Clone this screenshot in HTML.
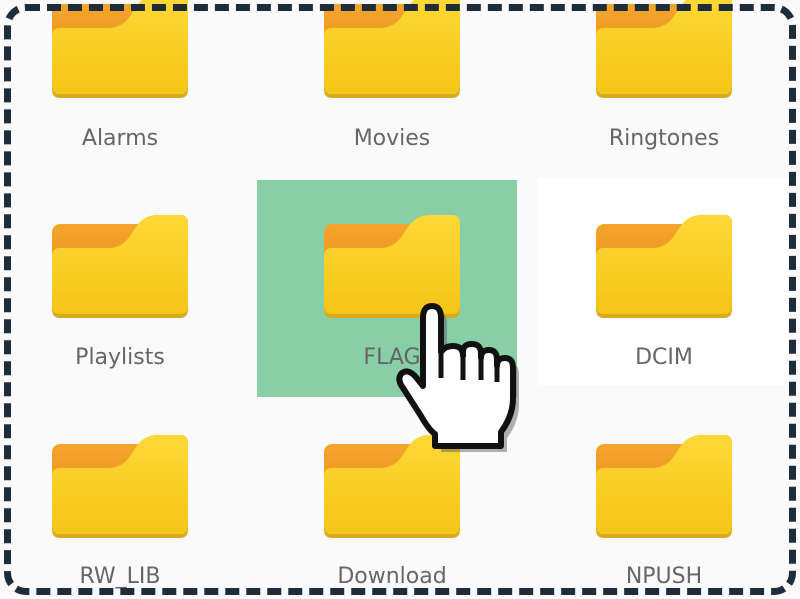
<!DOCTYPE html><html><head><style>
body{margin:0;width:800px;height:599px;overflow:hidden;background:#fafafa;font-family:"DejaVu Sans","Liberation Sans",sans-serif;position:relative}
.f{position:absolute;width:136px;height:103px}
.l{position:absolute;width:220px;text-align:center;font-size:22px;color:#666}
</style></head><body>
<div style="position:absolute;left:538px;top:178px;width:252px;height:207px;background:#fff"></div>
<div style="position:absolute;left:257px;top:180px;width:260px;height:217px;background:#88cea6"></div>
<svg width="0" height="0" style="position:absolute"><defs>
<linearGradient id="g" x1="0" y1="0" x2="0" y2="1"><stop offset="0" stop-color="#fdd835"/><stop offset="1" stop-color="#f5c518"/></linearGradient>
<linearGradient id="o" x1="0" y1="0" x2="0" y2="1"><stop offset="0" stop-color="#f5a52c"/><stop offset="1" stop-color="#e8901f"/></linearGradient>
<symbol id="fd" viewBox="0 0 136 103">
<rect x="0" y="9" width="95" height="55" rx="8" fill="url(#o)"/>
<path d="M0 41 Q0 33 8 33 L56 33 Q70 33 78 21 L84 12 Q92 0 106 0 L128 0 Q136 0 136 8 L136 94 Q136 103 128 103 L8 103 Q0 103 0 94 Z" fill="#d9aa1e"/>
<path d="M0 41 Q0 33 8 33 L56 33 Q70 33 78 21 L84 12 Q92 0 106 0 L128 0 Q136 0 136 8 L136 91 Q136 99 128 99 L8 99 Q0 99 0 91 Z" fill="url(#g)"/>
</symbol></defs></svg>
<svg class="f" style="left:52px;top:-5px"><use href="#fd"/></svg>
<svg class="f" style="left:324px;top:-5px"><use href="#fd"/></svg>
<svg class="f" style="left:596px;top:-5px"><use href="#fd"/></svg>
<svg class="f" style="left:52px;top:215px"><use href="#fd"/></svg>
<svg class="f" style="left:324px;top:215px"><use href="#fd"/></svg>
<svg class="f" style="left:596px;top:215px"><use href="#fd"/></svg>
<svg class="f" style="left:52px;top:435px"><use href="#fd"/></svg>
<svg class="f" style="left:324px;top:435px"><use href="#fd"/></svg>
<svg class="f" style="left:596px;top:435px"><use href="#fd"/></svg>
<div class="l" style="left:10px;top:126px">Alarms</div>
<div class="l" style="left:282px;top:126px">Movies</div>
<div class="l" style="left:554px;top:126px">Ringtones</div>
<div class="l" style="left:10px;top:345px">Playlists</div>
<div class="l" style="left:282px;top:345px">FLAG</div>
<div class="l" style="left:554px;top:345px">DCIM</div>
<div class="l" style="left:10px;top:564px">RW_LIB</div>
<div class="l" style="left:282px;top:564px">Download</div>
<div class="l" style="left:554px;top:564px">NPUSH</div>
<svg style="position:absolute;left:395px;top:298px" width="130" height="160" viewBox="0 0 130 160">
<path d="M46 20 Q46 8 37 8 Q28 8 28 20 L28 88 L20 78 Q12 70 6 76 Q2 82 8 90 L26 118 Q34 132 40 136 L40 148 L106 148 L106 134 Q118 118 118 100 L118 70 Q118 60 110 60 Q102 60 102 68 L102 62 Q102 52 94 52 Q86 52 86 60 L86 56 Q86 46 77 46 Q68 46 68 54 L68 58 Q68 48 58 48 Q50 48 46 54 Z" fill="#555" opacity=".45" transform="translate(6,6)"/>
<path d="M46 20 Q46 8 37 8 Q28 8 28 20 L28 88 L20 78 Q12 70 6 76 Q2 82 8 90 L26 118 Q34 132 40 136 L40 148 L106 148 L106 134 Q118 118 118 100 L118 70 Q118 60 110 60 Q102 60 102 68 L102 62 Q102 52 94 52 Q86 52 86 60 L86 56 Q86 46 77 46 Q68 46 68 54 L68 58 Q68 48 58 48 Q50 48 46 54 Z" fill="#fff" stroke="#111" stroke-width="6" stroke-linejoin="round"/>
<path d="M46 54 L46 80 M68 58 L68 82 M86 60 L86 82 M102 68 L102 84" stroke="#111" stroke-width="5" fill="none"/>
</svg>
<div style="position:absolute;left:4px;top:4px;right:4px;bottom:4px;border:7px dashed #1f2c3b;border-radius:22px"></div>
</body></html>
